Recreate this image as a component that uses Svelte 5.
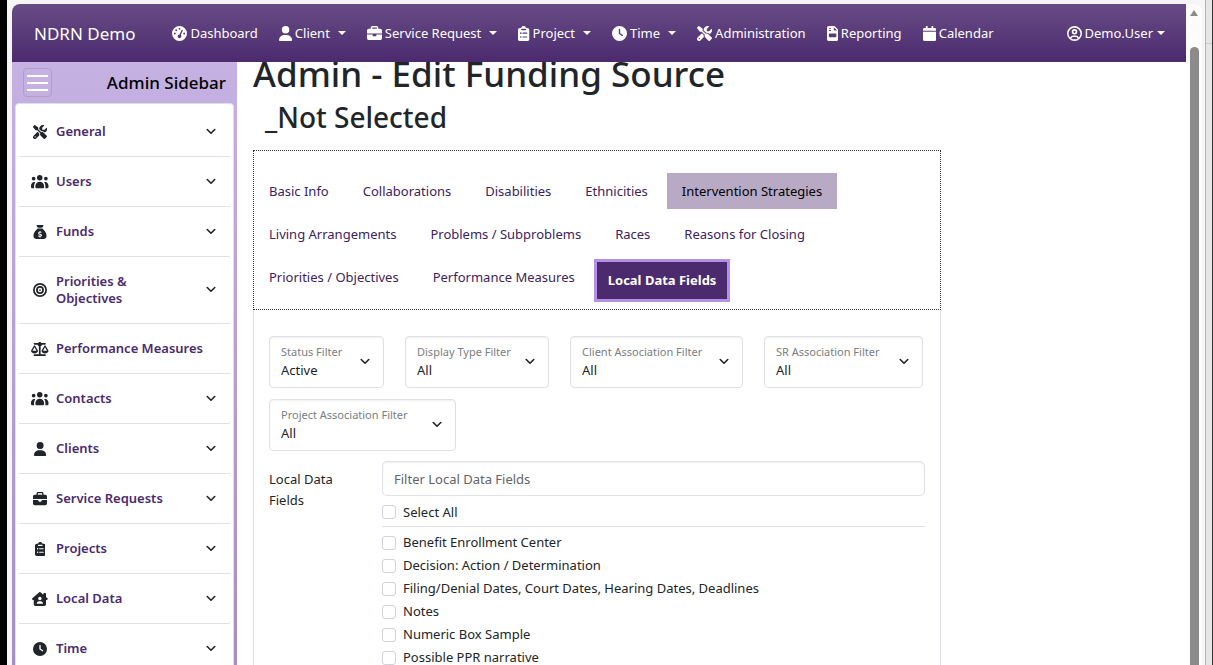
<script>
  const icons = {
    gauge: { box: '0 0 512 512', d: 'M0 256a256 256 0 1 1 512 0A256 256 0 1 1 0 256zM288 96a32 32 0 1 0 -64 0 32 32 0 1 0 64 0zM256 416c35.3 0 64-28.7 64-64c0-17.4-6.9-33.1-18.1-44.6L366 161.7c5.3-12.1-.2-26.3-12.3-31.6s-26.3 .2-31.6 12.3L257.9 288c-.6 0-1.3 0-1.9 0c-35.3 0-64 28.7-64 64s28.7 64 64 64zM176 144a32 32 0 1 0 -64 0 32 32 0 1 0 64 0zM96 288a32 32 0 1 0 0-64 32 32 0 1 0 0 64zm352-32a32 32 0 1 0 -64 0 32 32 0 1 0 64 0z' },
    user: { box: '0 0 448 512', d: 'M224 256A128 128 0 1 0 224 0a128 128 0 1 0 0 256zm-45.7 48C79.8 304 0 383.8 0 482.3C0 498.7 13.3 512 29.7 512H418.3c16.4 0 29.7-13.3 29.7-29.7C448 383.8 368.2 304 269.7 304H178.3z' },
    briefcase: { box: '0 0 512 512', d: 'M184 48H328c4.4 0 8 3.6 8 8V96H176V56c0-4.4 3.6-8 8-8zm-56 8V96H64C28.7 96 0 124.7 0 160v96H512V160c0-35.3-28.7-64-64-64H384V56c0-30.9-25.1-56-56-56H184c-30.9 0-56 25.1-56 56zM512 288H320v32c0 17.7-14.3 32-32 32H224c-17.7 0-32-14.3-32-32V288H0V416c0 35.3 28.7 64 64 64H448c35.3 0 64-28.7 64-64V288z' },
    clipboard: { box: '0 0 384 512', d: 'M192 0c-35 0-65 21-78 52-4 8-11 12-19 12H64C29 64 0 93 0 128V448c0 35 29 64 64 64H320c35 0 64-29 64-64V128c0-35-29-64-64-64H289c-8 0-15-4-19-12C257 21 227 0 192 0zM128 96H256c13 0 24 11 24 24s-11 24-24 24H128c-13 0-24-11-24-24s11-24 24-24zM96 216a28 28 0 1 1 0 56 28 28 0 1 1 0-56zM168 224H304c9 0 16 7 16 20s-7 20-16 20H168c-9 0-16-7-16-20s7-20 16-20zM96 348a28 28 0 1 1 0 56 28 28 0 1 1 0-56zM168 356H304c9 0 16 7 16 20s-7 20-16 20H168c-9 0-16-7-16-20s7-20 16-20z' },
    clock: { box: '0 0 512 512', d: 'M256 0a256 256 0 1 1 0 512A256 256 0 1 1 256 0zM232 120V256c0 8 4 15.5 10.7 20l96 64c11 7.4 25.9 4.4 33.3-6.7s4.4-25.9-6.7-33.3L280 243.2V120c0-13.3-10.7-24-24-24s-24 10.7-24 24z' },
    tools: { box: '0 0 512 512', d: 'M78.6 5C69.1-2.4 55.6-1.5 47 7L7 47c-8.5 8.5-9.4 22-2.1 31.6l80 104c4.5 5.9 11.6 9.4 19 9.4h54.1l109 109c-14.7 29-10 65.4 14.3 89.6l112 112c12.5 12.5 32.8 12.5 45.3 0l64-64c12.5-12.5 12.5-32.8 0-45.3l-112-112c-24.2-24.2-60.6-29-89.6-14.3l-109-109V104c0-7.500-3.500-14.500-9.400-19L78.6 5zM19.9 396.1C7.2 408.8 0 426.1 0 444.1C0 481.6 30.4 512 67.9 512c18 0 35.3-7.2 48-19.9L233.7 374.3c-7.8-20.9-9-43.6-3.6-65.1l-61.7-61.7L19.9 396.1zM512 144c0-10.5-1.1-20.7-3.2-30.5c-2.4-11.2-16.1-14.1-24.2-6l-63.9 63.9c-3 3-7.1 4.7-11.3 4.7H352c-8.8 0-16-7.2-16-16V102.6c0-4.2 1.7-8.3 4.7-11.3l63.9-63.9c8.1-8.1 5.2-21.8-6-24.2C388.7 1.1 378.5 0 368 0C288.5 0 224 64.5 224 144l0 .8 85.3 85.3c36-9.1 75.8 .5 104 28.7L429 274.5c49-23 83-72.8 83-130.5zM56 432a24 24 0 1 1 48 0 24 24 0 1 1 -48 0z' },
    file: { box: '0 0 384 512', d: 'M64 0C29 0 0 29 0 64V448c0 35 29 64 64 64H320c35 0 64-29 64-64V128L256 0H64zM72 64h56c5 0 8 3 8 10v12c0 7-3 10-8 10H72c-5 0-8-3-8-10V74c0-7 3-10 8-10zM72 136h56c5 0 8 3 8 10v12c0 7-3 10-8 10H72c-5 0-8-3-8-10v-12c0-7 3-10 8-10zM232 40l112 112H256c-13 0-24-11-24-24V40zM96 256H288c18 0 32 14 32 32v64c0 18-14 32-32 32H96c-18 0-32-14-32-32V288c0-18 14-32 32-32z' },
    calendar: { box: '0 0 448 512', d: 'M96 32V64H48C21.500 64 0 85.500 0 112v48H448V112c0-26.500-21.500-48-48-48H352V32c0-17.700-14.300-32-32-32s-32 14.300-32 32V64H160V32c0-17.700-14.300-32-32-32S96 14.300 96 32zM448 192H0V464c0 26.500 21.500 48 48 48H400c26.500 0 48-21.500 48-48V192z' },
    account: { box: '0 0 512 512', d: 'M256 0a256 256 0 1 1 0 512A256 256 0 1 1 256 0zM256 56A200 200 0 0 0 110 393c20-46 56-73 106-73h80c50 0 86 27 106 73A200 200 0 0 0 256 56zM256 456c40 0 77-12 108-32-12-34-38-52-68-52h-80c-30 0-56 18-68 52 31 20 68 32 108 32zM256 104a94 94 0 1 1 0 188 94 94 0 1 1 0-188zM256 160a38 38 0 1 0 0 76 38 38 0 1 0 0-76z' },
    users: { box: '0 0 640 512', d: 'M320 0a100 100 0 1 1 0 200A100 100 0 1 1 320 0zM96 64a68 68 0 1 1 0 136A68 68 0 1 1 96 64zM544 64a68 68 0 1 1 0 136A68 68 0 1 1 544 64zM320 248c88 0 160 72 160 160v40c0 18-14 32-32 32H192c-18 0-32-14-32-32V408c0-88 72-160 160-160zM0 396c0-80 50-144 112-144 18 0 34 4 49 11-31 38-49 90-49 149v36c0 12 2 22 7 32H32c-18 0-32-14-32-32V396zM640 396c0-80-50-144-112-144-18 0-34 4-49 11 31 38 49 90 49 149v36c0 12-2 22-7 32h87c18 0 32-14 32-32V396z' },
    bag: { box: '0 0 512 512', d: 'M144 0H368c14 0 22 16 14 28L336 96H176L130 28C122 16 130 0 144 0zM176 128H336c88 58 160 160 160 272 0 62-50 112-112 112H128C66 512 16 462 16 400 16 288 88 186 176 128zM238 220v24c-30 6-50 26-50 54 0 66 98 46 98 78 0 22-52 18-82 2l-14 38c14 8 30 13 48 15v25h38v-25c30-5 50-26 50-55 0-68-98-48-98-78 0-20 40-18 72-6l10-38c-10-4-22-7-34-9v-25h-38z' },
    bullseye: { box: '0 0 512 512', d: 'M448 256A192 192 0 1 0 64 256a192 192 0 1 0 384 0zM0 256a256 256 0 1 1 512 0A256 256 0 1 1 0 256zm256 80a80 80 0 1 0 0-160 80 80 0 1 0 0 160zm0-224a144 144 0 1 1 0 288 144 144 0 1 1 0-288zM224 256a32 32 0 1 1 64 0 32 32 0 1 1 -64 0z' },
    scale: { box: '0 0 640 512', d: 'M128 32H260a80 80 0 0 1 120 0H512c18 0 32 14 32 32s-14 32-32 32H399c-5 26-23 47-47 57V448H512c18 0 32 14 32 32s-14 32-32 32H128c-18 0-32-14-32-32s14-32 32-32H288V153c-24-10-42-31-47-57H128c-18 0-32-14-32-32s14-32 32-32zM128 192L55 320H201L128 192zM128 416C65 416 12 382 2 337c-3-11 1-22 7-32L101 143c11-19 43-19 54 0l92 162c6 10 10 21 7 32-10 45-63 79-126 79zM512 192L439 320H585L512 192zM512 416c-63 0-116-34-126-79-3-11 1-22 7-32l92-162c11-19 43-19 54 0l92 162c6 10 10 21 7 32-10 45-63 79-126 79z' },
    house: { box: '0 0 576 512', d: 'M309 8c-12-11-30-11-42 0L11 232c-20 18-8 56 21 56H64V448c0 35 29 64 64 64H448c35 0 64-29 64-64V288h32c29 0 41-38 21-56L512 186V64c0-18-14-32-32-32H448c-18 0-32 14-32 32v38L309 8zM288 176a64 64 0 1 1 0 128 64 64 0 1 1 0-128zM256 336h64c44 0 80 36 80 80 0 9-7 16-16 16H192c-9 0-16-7-16-16 0-44 36-80 80-80z' }
  };

  const nav = [
    { label: 'Dashboard', icon: 'gauge' },
    { label: 'Client', icon: 'user', menu: true },
    { label: 'Service Request', icon: 'briefcase', menu: true },
    { label: 'Project', icon: 'clipboard', menu: true },
    { label: 'Time', icon: 'clock', menu: true },
    { label: 'Administration', icon: 'tools' },
    { label: 'Reporting', icon: 'file' },
    { label: 'Calendar', icon: 'calendar' }
  ];

  const side = [
    { label: 'General', icon: 'tools', open: true },
    { label: 'Users', icon: 'users', open: true },
    { label: 'Funds', icon: 'bag', open: true },
    { label: 'Priorities & Objectives', icon: 'bullseye', open: true },
    { label: 'Performance Measures', icon: 'scale', open: false },
    { label: 'Contacts', icon: 'users', open: true },
    { label: 'Clients', icon: 'user', open: true },
    { label: 'Service Requests', icon: 'briefcase', open: true },
    { label: 'Projects', icon: 'clipboard', open: true },
    { label: 'Local Data', icon: 'house', open: true },
    { label: 'Time', icon: 'clock', open: true }
  ];

  const tabRows = [
    ['Basic Info', 'Collaborations', 'Disabilities', 'Ethnicities', 'Intervention Strategies'],
    ['Living Arrangements', 'Problems / Subproblems', 'Races', 'Reasons for Closing'],
    ['Priorities / Objectives', 'Performance Measures', 'Local Data Fields']
  ];
  const hovered = 'Intervention Strategies';
  let active = $state('Local Data Fields');

  const filters = [
    { id: 'status', label: 'Status Filter', value: 'Active', width: 115 },
    { id: 'display', label: 'Display Type Filter', value: 'All', width: 144 },
    { id: 'client', label: 'Client Association Filter', value: 'All', width: 173 },
    { id: 'sr', label: 'SR Association Filter', value: 'All', width: 159 },
    { id: 'project', label: 'Project Association Filter', value: 'All', width: 187 }
  ];

  const fields = [
    'Benefit Enrollment Center',
    'Decision: Action / Determination',
    'Filing/Denial Dates, Court Dates, Hearing Dates, Deadlines',
    'Notes',
    'Numeric Box Sample',
    'Possible PPR narrative'
  ];
</script>

{#snippet icon(name)}
  <svg class="icon" viewBox={icons[name].box} aria-hidden="true"><path fill="currentColor" fill-rule="evenodd" d={icons[name].d} /></svg>
{/snippet}

{#snippet chevron()}
  <svg class="chevron" viewBox="0 0 16 16" aria-hidden="true"><path d="M2 4l6 6 6-6" fill="none" stroke="currentColor" stroke-width="2.600" stroke-linecap="round" stroke-linejoin="round" /></svg>
{/snippet}

<div class="window">
  <div class="page">
    <header>
      <a class="brand" href="#home">NDRN Demo</a>
      <nav>
        {#each nav as item}
          <a class:menu={item.menu} href="#nav">{@render icon(item.icon)}<span>{item.label}</span></a>
        {/each}
      </nav>
      <a class="menu account" href="#account">{@render icon('account')}<span>Demo.User</span></a>
    </header>
    <div class="columns">
      <aside>
        <div class="sidehead">
          <button class="burger" aria-label="Toggle sidebar"><i></i><i></i><i></i></button>
          <h2>Admin Sidebar</h2>
        </div>
        <div class="sidelist">
          {#each side as item}
            <button class="sideitem">
              <span class="sideicon">{@render icon(item.icon)}</span>
              <span class="sidelabel" class:full={!item.open}>{item.label}</span>
              {#if item.open}{@render chevron()}{/if}
            </button>
          {/each}
        </div>
      </aside>
      <main>
        <h1>Admin - Edit Funding Source</h1>
        <h2 class="sub">_Not Selected</h2>
        <div class="tabs">
          {#each tabRows as row}
            <div class="tabrow">
              {#each row as tab}
                <button class="tab" class:active={tab === active} class:lit={tab === hovered} onclick={() => (active = tab)}>{tab}</button>
              {/each}
            </div>
          {/each}
        </div>
        <section class="panel">
          <div class="filters">
            {#each filters as f}
              <div class="filter" style="width: {f.width}px">
                <label for={f.id}>{f.label}</label>
                <select id={f.id}><option>{f.value}</option></select>
                {@render chevron()}
              </div>
            {/each}
          </div>
          <div class="fieldrow">
            <label class="fieldlabel" for="search">Local Data Fields</label>
            <div class="fieldbody">
              <input id="search" class="search" type="text" placeholder="Filter Local Data Fields" />
              <label class="check all"><input type="checkbox" />Select All</label>
              <div class="checks">
                {#each fields as f}
                  <label class="check"><input type="checkbox" />{f}</label>
                {/each}
              </div>
            </div>
          </div>
        </section>
      </main>
    </div>
  </div>
  <div class="scroll"><span class="up"></span><span class="thumb"></span></div>
  <div class="edge"></div>
</div>

<style>
  :global(body) { margin: 0; overflow: hidden; background: #f6f6f6; }
  * { box-sizing: border-box; }
  button, select, input { font: inherit; color: inherit; }
  a { color: inherit; text-decoration: none; }
  h1, h2 { margin: 0; font-weight: 500; }

  .window {
    display: flex;
    height: 100vh;
    padding-top: 4px;
    border-left: 7px solid #000;
    border-right: 1px solid #333;
    overflow: hidden;
    font: 13px/21px "Noto Sans", "Open Sans", sans-serif;
    color: #212529;
  }
  .page {
    flex: 1;
    min-width: 0;
    margin-left: 5px;
    background: #fff;
    border-top-left-radius: 8px;
    overflow: hidden;
  }

  header {
    position: relative;
    z-index: 1;
    display: flex;
    align-items: center;
    height: 58px;
    padding: 0 21px 0 22px;
    background: linear-gradient(#684c85, #4b2a6e);
    color: #fff;
  }
  .brand { font-size: 17px; margin-right: 37px; white-space: nowrap; }
  nav { display: flex; gap: 21px; }
  header a { display: flex; align-items: center; gap: 3px; white-space: nowrap; }
  header .icon { height: 15px; }
  .menu::after {
    content: '';
    margin-left: 5px;
    border: 4px solid transparent;
    border-top-color: currentColor;
    border-bottom: 0;
  }
  .account { margin-left: auto; }
  .account::after { margin-left: 1px; }
  .icon { display: block; }

  .columns { display: flex; }
  aside {
    flex: none;
    width: 225px;
    padding: 0 3px;
    background: linear-gradient(#c5b1e2, #a48fc0);
  }
  .sidehead {
    display: flex;
    align-items: center;
    justify-content: space-between;
    height: 41px;
    padding: 0 8px;
    color: #000;
  }
  .sidehead h2 { font-size: 17px; }
  .burger {
    display: grid;
    align-content: center;
    gap: 5px;
    width: 29px;
    height: 29px;
    padding: 0 3px;
    border: 1px solid #b19fcb;
    border-radius: 4px;
    background: none;
  }
  .burger i { height: 2px; background: #fff; }
  .sidelist {
    padding: 3px;
    border: 1px solid #dee2e6;
    border-radius: 4px;
    background: #fff;
  }
  .sideitem {
    display: flex;
    align-items: center;
    width: 100%;
    min-height: 50px;
    padding: 16px 14px 16px 11px;
    border: 0;
    border-bottom: 1px solid #dee2e6;
    background: none;
    line-height: 17px;
    font-weight: 600;
    text-align: left;
    color: #4b2a6e;
  }
  .sideicon { display: grid; place-items: center; flex: none; width: 20px; margin-right: 6px; color: #212529; }
  .sideicon .icon { height: 14px; }
  .sidelabel { flex: none; max-width: 110px; }
  .full { max-width: none; white-space: nowrap; }
  .chevron { flex: none; width: 10px; height: 10px; color: #212529; }
  .sideitem .chevron { margin-left: auto; }

  main { flex: none; width: calc((100% - 225px) * .75); margin-left: 4px; padding: 0 12px; }
  h1 { margin-top: -9px; font-size: 35px; line-height: 42px; white-space: nowrap; }
  .sub { margin: 4px 0 0 12px; font-size: 28px; line-height: 36px; }
  .tabs {
    display: grid;
    gap: 7px;
    margin-top: 15px;
    padding: 22px 0 7px;
    border: 1px dotted #333;
    color: #3c2260;
  }
  .tabrow { display: flex; gap: 4px; }
  .tab { height: 36px; padding: 0 15px; border: 0; background: none; white-space: nowrap; }
  .lit { background: #b8aac5; color: #000; }
  .active {
    height: 43px;
    padding: 0 11px;
    border: 3px solid #b590e8;
    background: #4b2a6e;
    color: #fff;
    font-weight: 700;
  }

  .panel { padding: 26px 15px 0; border: solid #dee2e6; border-width: 0 1px; }
  .filters { display: flex; flex-wrap: wrap; gap: 11px 21px; }
  .filter {
    position: relative;
    display: grid;
    align-content: start;
    height: 52px;
    padding: 6px 0 0 11px;
    border: 1px solid #dee2e6;
    border-radius: 4px;
    box-shadow: inset 0 1px 2px #0001;
  }
  .filter label { height: 18px; font-size: 11px; line-height: 18px; color: #7b7e81; white-space: nowrap; }
  .filter select {
    appearance: none;
    width: 100%;
    height: 19px;
    padding: 0;
    border: 0;
    background: none;
    line-height: 19px;
  }
  .filter .chevron { position: absolute; right: 13px; top: 20px; }
  .fieldrow { display: flex; margin-top: 10px; }
  .fieldlabel { width: 113px; flex: none; padding: 8px 30px 0 0; }
  .fieldbody { flex: 1; }
  .search {
    display: block;
    width: 100%;
    height: 35px;
    padding: 0 11px;
    border: 1px solid #dee2e6;
    border-radius: 5px;
    box-shadow: inset 0 1px 2px #0001;
  }
  .search::placeholder { color: #5f6468; opacity: 1; }
  .check { display: flex; align-items: center; gap: 7px; }
  .check input {
    appearance: none;
    width: 14px;
    height: 14px;
    margin: 0;
    border: 1px solid #ced4da;
    border-radius: 3px;
  }
  .all { height: 31px; padding-top: 2px; border-bottom: 1px solid #dee2e6; }
  .checks { display: grid; gap: 2px; padding-top: 5px; }

  .scroll {
    display: flex;
    flex-direction: column;
    align-items: center;
    flex: none;
    width: 16px;
    padding-top: 6px;
    background: #fcfcfc;
    border-top-right-radius: 8px;
  }
  .up { border: 4px solid transparent; border-bottom: 6px solid #8b8b8b; border-top: 0; }
  .thumb { flex: 1; width: 9px; margin-top: 31px; background: #8b8b8b; border-radius: 5px 5px 0 0; }
  .edge { flex: none; width: 7px; margin: -4px 0 0 3px; border-left: 1px solid #b5b5b5; background: linear-gradient(#e6e6e6 43px, #c9c9c9 43px 44px, #e6e6e6 44px); }
</style>
